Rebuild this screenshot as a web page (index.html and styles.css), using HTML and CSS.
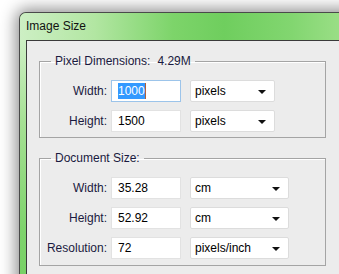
FILE: index.html
```html
<!DOCTYPE html>
<html lang="en">
<head>
    <meta charset="UTF-8">
    <meta name="viewport" content="width=device-width, initial-scale=1.0">
    <title>Image Size</title>
    <link rel="stylesheet" href="styles.css">
</head>
<body>
    <div class="desk">
        <div class="window">
            <div class="titlebar">Image Size</div>
            <div class="frame">
                <div class="content">
                    <fieldset class="group">
                        <legend>Pixel Dimensions:<span class="total">4.29M</span></legend>
                        <div class="row">
                            <span class="label">Width:</span>
                            <div class="field focus"><span class="sel">1000</span></div>
                            <div class="select short">pixels<span class="arrow"></span></div>
                        </div>
                        <div class="row">
                            <span class="label">Height:</span>
                            <div class="field">1500</div>
                            <div class="select short">pixels<span class="arrow"></span></div>
                        </div>
                    </fieldset>

                    <fieldset class="group doc">
                        <legend>Document Size:</legend>
                        <div class="row">
                            <span class="label">Width:</span>
                            <div class="field">35.28</div>
                            <div class="select">cm<span class="arrow"></span></div>
                        </div>
                        <div class="row">
                            <span class="label">Height:</span>
                            <div class="field">52.92</div>
                            <div class="select">cm<span class="arrow"></span></div>
                        </div>
                        <div class="row">
                            <span class="label">Resolution:</span>
                            <div class="field">72</div>
                            <div class="select">pixels/inch<span class="arrow"></span></div>
                        </div>
                    </fieldset>
                </div>
            </div>
        </div>
    </div>
</body>
</html>
```

FILE: styles.css
```css
html, body {
    margin: 0;
    padding: 0;
    background: #ffffff;
}
body {
    font-family: "Liberation Sans", Arial, sans-serif;
    font-size: 12px;
    overflow: hidden;
    width: 339px;
    height: 274px;
}
.desk {
    padding: 12px 0 0 19px;
    height: 262px;
    overflow: hidden;
}
.window {
    width: 340px;
    height: 300px;
    border-top: 1px solid #4a4a4a;
    border-left: 1px solid #4a4a4a;
    border-radius: 7px 0 0 0;
    box-shadow: 0 0 16px 3px rgba(0, 0, 0, 0.45);
    background: #a8e496;
    overflow: hidden;
}
.titlebar {
    height: 27px;
    line-height: 27px;
    padding-left: 6px;
    color: #111;
    background: linear-gradient(90deg, #cdefc4 0%, #b2e6a2 22%, #7dd46a 45%, #6fce5e 60%, #82d670 80%, #a4e28f 100%);
}
.frame {
    padding-left: 6px;
    height: 273px;
    background: linear-gradient(180deg, #cdefc4 0%, #a6e094 30%, #7ed36c 70%, #74cf62 100%);
}
.content {
    border-top: 1px solid #3a3a3a;
    border-left: 1px solid #3a3a3a;
    background: #ececec;
    height: 100%;
    padding: 13px 0 0 12px;
}
.group {
    width: 281px;
    margin: 0;
    padding: 12px 0 5px 4px;
    border: 1px solid #a4a4a4;
    box-shadow: inset 1px 1px 0 #ffffff;
}
.group.doc {
    margin-top: 13px;
    padding-bottom: 6px;
}
legend {
    margin-left: 7px;
    padding: 0 4px;
    line-height: 14px;
    color: #1a1a40;
}
.total {
    margin-left: 7px;
}
.row {
    display: flex;
    align-items: center;
    height: 22px;
    margin-top: 8px;
}
.row:first-of-type {
    margin-top: 0;
}
.label {
    width: 63px;
    text-align: right;
    color: #1a1a40;
    white-space: nowrap;
}
.field {
    box-sizing: border-box;
    width: 70px;
    height: 22px;
    margin-left: 4px;
    padding-left: 6px;
    line-height: 20px;
    background: #fff;
    border: 1px solid #e2e2e2;
    color: #000;
}
.field.focus {
    border-color: #9cc4ea;
}
.sel {
    background: #3399ff;
    color: #fff;
    padding: 1px 0;
    border-right: 1px solid #b0603a;
}
.select {
    box-sizing: border-box;
    width: 99px;
    height: 22px;
    margin-left: 9px;
    padding-left: 4px;
    line-height: 20px;
    background: #fff;
    border: 1px solid #dcdcdc;
    border-radius: 2px;
    color: #000;
    position: relative;
}
.select.short {
    width: 85px;
}
.arrow {
    position: absolute;
    right: 8px;
    top: 9px;
    width: 0;
    height: 0;
    border-left: 4px solid transparent;
    border-right: 4px solid transparent;
    border-top: 4px solid #111;
}
```
